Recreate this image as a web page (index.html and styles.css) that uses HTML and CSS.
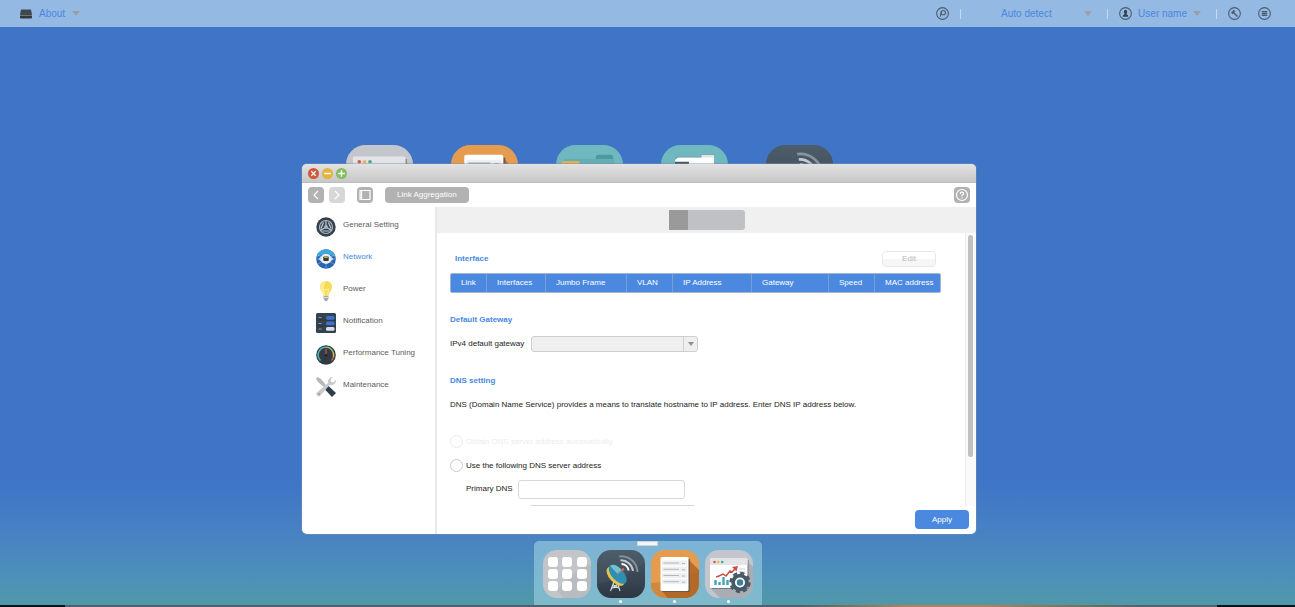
FILE: index.html
```html
<!DOCTYPE html>
<html lang="en">
<head>
<meta charset="utf-8">
<title>Network settings</title>
<link rel="stylesheet" href="styles.css">
</head>
<body>
<svg class="defs" aria-hidden="true">
  <linearGradient id="darkTile" x1="0" y1="0" x2="0" y2="1"><stop offset="0" stop-color="#4a5a68"/><stop offset="1" stop-color="#2c3844"/></linearGradient>
  <clipPath id="tile"><rect width="48" height="48" rx="14"/></clipPath>
  <symbol id="app-grid" viewBox="0 0 48 48">
    <g clip-path="url(#tile)"><rect width="48" height="48" fill="#c3c5c9"/>
    <path d="M14 40 43 12 48 17V48H20Z" fill="#aeb1b6" opacity=".5"/></g>
    <g fill="#fff"><rect x="5" y="7" width="10" height="10" rx="3"/><rect x="19" y="7" width="10" height="10" rx="3"/><rect x="34" y="7" width="10" height="10" rx="3"/><rect x="5" y="19" width="10" height="10" rx="3"/><rect x="19" y="19" width="10" height="10" rx="3"/><rect x="34" y="19" width="10" height="10" rx="3"/><rect x="5" y="31" width="10" height="10" rx="3"/><rect x="19" y="31" width="10" height="10" rx="3"/><rect x="34" y="31" width="10" height="10" rx="3"/></g>
  </symbol>
  <symbol id="app-dish" viewBox="0 0 48 48">
    <g clip-path="url(#tile)"><rect width="48" height="48" fill="url(#darkTile)"/>
    <path d="M0 34Q26 30 48 12V0H0Z" fill="#5b6873" opacity=".22"/></g>
    <g fill="none" stroke-width="1.9"><path d="M22.300 6.500A16 16 0 0 1 40.500 22" stroke="#89929e"/><path d="M23.500 10.300A12 12 0 0 1 36 21" stroke="#c4c9d0"/><path d="M24.500 14A7 7 0 0 1 31.500 20.500" stroke="#fff"/></g>
    <path d="M17.500 30 13.500 41M19.500 30l3.500 11M14.500 38l8-1M15.500 34.500l7 4M21 34l-6.500 4.500" stroke="#d9dde0" stroke-width="1.100" fill="none"/>
    <g transform="rotate(48 20 25)"><ellipse cx="20" cy="27" rx="11.500" ry="6" fill="#e7c34c"/><ellipse cx="20" cy="24" rx="11.500" ry="6" fill="#2f8fb2"/><path d="M8.500 24Q9 18 20 18L20 24Z" fill="#6fc3cf"/></g>
    <path d="m20 24 6-4.500" stroke="#bd7059" stroke-width="1"/><circle cx="26" cy="19.500" r="1.400" fill="#db5a42"/>
  </symbol>
  <symbol id="app-list" viewBox="0 0 48 48">
    <g clip-path="url(#tile)"><rect width="48" height="48" fill="#e59c4f"/>
    <path d="M37 9 48 20V48H17L10 40Z" fill="#b96d2b"/>
    <path d="M0 33Q25 31 48 22V48H0Z" fill="#aa611f" opacity=".35"/></g>
    <rect x="11" y="9" width="28" height="33" rx="1" fill="#6d5a4b"/>
    <rect x="9.500" y="7" width="28" height="34" rx="1.500" fill="#fff"/>
    <g fill="#eeeff1"><rect x="11" y="10.500" width="25" height="5"/><rect x="11" y="16.800" width="25" height="5"/><rect x="11" y="23" width="25" height="5"/><rect x="11" y="29.200" width="25" height="5"/></g>
    <path d="M12.500 13H28M12.500 19.300H28M12.500 25.500H28M12.500 31.700H28" stroke="#a6a8ab" stroke-width=".8"/>
    <path d="M31 13.500h3M31 19.800h3M31 26h3M31 32.200h3" stroke="#74aab2" stroke-width=".7"/>
  </symbol>
  <symbol id="app-monitor" viewBox="0 0 48 48">
    <g clip-path="url(#tile)"><rect width="48" height="48" fill="#c3c6cc"/>
    <path d="M5 38 40 9 48 17V48H15Z" fill="#9a9da1" opacity=".6"/></g>
    <rect x="7" y="10" width="36.500" height="29" fill="#747a80"/>
    <rect x="5" y="8.500" width="37.500" height="29.500" rx="1" fill="#fff"/><path d="M5 10q0-1.500 1.500-1.500h34.500q1.500 0 1.500 1.500v5H5Z" fill="#e3e4e7"/>
    <circle cx="9.500" cy="12" r="1.300" fill="#cf5b4c"/><circle cx="13.300" cy="12" r="1.300" fill="#e5ba56"/><circle cx="17.200" cy="12" r="1.300" fill="#4aa594"/>
    <path d="M11 27l3-1 4-2 3 2 4-5 2 1 4-4" fill="none" stroke="#c94f40" stroke-width="1.500"/><path d="m27 17 6-1-1.500 5.500Z" fill="#c94f40"/>
    <path d="M10.500 35v-5M14.500 35v-3M18.500 35v-8M22.500 35v-5" stroke="#42a3b9" stroke-width="2.400"/>
    <path d="M34 19h6M34 22h6" stroke="#c7cbd0"/>
    <circle cx="35" cy="32.500" r="9.500" fill="none" stroke="#475966" stroke-width="2.400" stroke-dasharray="4.200 3.262"/>
    <circle cx="35" cy="32.500" r="8.800" fill="#475966"/><circle cx="35" cy="32.500" r="5" fill="#fff"/><circle cx="35" cy="32.500" r="3.200" fill="#3b8096"/>
  </symbol>
  <symbol id="app-folder" viewBox="0 0 48 48">
    <rect width="48" height="48" rx="14" fill="#70b8c0"/>
    <path d="M28.500 12V9q0-2 2-2h8.500q2 0 2 2v4Z" fill="#4b9a9f"/><rect x="5" y="10" width="37" height="27" rx="2" fill="#65aeb4"/>
    <rect x="4" y="11.500" width="13" height="6" rx="1.500" fill="#e0b34d"/><rect x="4" y="14" width="34" height="25" rx="2" fill="#e0b34d"/>
  </symbol>
  <symbol id="app-files" viewBox="0 0 48 48">
    <rect width="48" height="48" rx="14" fill="#70b8c0"/>
    <path d="M11 8.500h18V6.500h9V35H11Z" fill="#6d8f96"/><path d="M29 10V7h9v5Z" fill="#dfe4e6"/><path d="M12 9h26v26H10V11Z" fill="#fff"/><path d="M10 12h10v4h16v20H10Z" fill="#485663"/>
  </symbol>
</svg>

<header class="topbar">
  <button class="menu-button menu-about" type="button">
    <svg width="12" height="10" viewBox="0 0 12 10"><path d="M1 .5h10l1 5.500H0Z" fill="#3f474f"/><rect y="6" width="12" height="3.500" rx="1" fill="#35393d"/><path d="M0 6.500h12" stroke="#8a8d90" stroke-width=".7"/></svg>
    <span>About</span><i class="caret"></i>
  </button>
  <div class="topbar-tools">
    <button class="round-icon" type="button" aria-label="Search"><svg viewBox="0 0 12 12"><circle cx="6" cy="6" r="5.400"/><circle cx="6.700" cy="5.200" r="2"/><path d="M5 4.200 3.900 9"/></svg></button>
    <span class="divider"></span>
    <button class="menu-button menu-language" type="button"><span>Auto detect</span><i class="caret"></i></button>
    <span class="divider"></span>
    <button class="menu-button menu-user" type="button">
      <svg class="user-icon" viewBox="0 0 12 12"><circle cx="6" cy="6" r="5.400" fill="none" stroke="#4b5b6d"/><ellipse cx="6" cy="4.500" rx="1.500" ry="2" fill="#344150"/><path d="M3.300 9q0-1.500 2-2.500V5.500h1.400v1q2 1 2 2.500Z" fill="#344150"/></svg>
      <span>User name</span><i class="caret"></i>
    </button>
    <span class="divider"></span>
    <button class="round-icon" type="button" aria-label="Tools"><svg viewBox="0 0 12 12"><circle cx="6" cy="6" r="5.400"/><path d="m5.200 5.200 3.600 3.500" stroke-width="1.300"/><path d="m3.500 6 2.500-2.700" stroke-width="2"/></svg></button>
    <button class="round-icon" type="button" aria-label="Messages"><svg viewBox="0 0 12 12"><circle cx="6" cy="6" r="5.400"/><path d="M3.500 4.200h5M3.500 6h5M3.500 7.800h5" stroke-width="1.200"/></svg></button>
  </div>
</header>

<main class="desktop">
  <div class="apps">
    <svg><use href="#app-monitor"/></svg>
    <svg><use href="#app-list"/></svg>
    <svg><use href="#app-folder"/></svg>
    <svg><use href="#app-files"/></svg>
    <svg><use href="#app-dish"/></svg>
  </div>

  <section class="window">
    <div class="titlebar">
      <button class="light light-close" type="button" aria-label="Close"><svg viewBox="0 0 10 10"><path d="m3 3 4 4M7 3 3 7"/></svg></button>
      <button class="light light-min" type="button" aria-label="Minimize"><svg viewBox="0 0 10 10"><path d="M2 5h6"/></svg></button>
      <button class="light light-max" type="button" aria-label="Maximize"><svg viewBox="0 0 10 10"><path d="M2 5h6M5 2v6"/></svg></button>
    </div>
    <div class="toolbar">
      <button class="tool" type="button" aria-label="Back"><svg viewBox="0 0 16 16"><path d="m10 4-4 4 4 4"/></svg></button>
      <button class="tool tool-off" type="button" aria-label="Forward"><svg viewBox="0 0 16 16"><path d="m6 4 4 4-4 4"/></svg></button>
      <button class="tool tool-panel" type="button" aria-label="Toggle sidebar"><svg viewBox="0 0 16 16"><path d="M3 3.500h10v9H3ZM4.500 3.500v9"/></svg></button>
      <button class="crumb" type="button">Link Aggregation</button>
      <button class="tool tool-help" type="button" aria-label="Help"><svg viewBox="0 0 16 16"><circle cx="8" cy="8" r="5.500"/><path d="M6.300 6.900q0-1.800 1.700-1.800t1.700 1.500Q9.700 7.500 8 8.300v1M8 10.200v1.200"/></svg></button>
    </div>
    <div class="window-body">
      <nav class="sidebar">
        <a href="#"><svg viewBox="0 0 20 20"><circle cx="10" cy="10" r="9.700" fill="#34404c"/><circle cx="10" cy="10" r="6.500" fill="none" stroke="#aab8c4" stroke-width="1.200"/><path d="M7.500 5.500 5 11.500M12.500 5.500 15 11.500M6.500 14h7M10 10V4M10 10l-5.500 3.500M10 10l5.500 3.500" fill="none" stroke="#c1cbd3" stroke-width="1.200"/><circle cx="10" cy="10" r="2" fill="#a6b2bd"/></svg><span>General Setting</span></a>
        <a href="#" class="active"><svg viewBox="0 0 20 20"><circle cx="10" cy="10" r="9.800" fill="#2864b4"/><path d="M.5 8a9.700 9.700 0 0 1 19 0Q10 3 .5 8Z" fill="#43a6d9"/><path d="m2 6 16 9M18 6 2 15M10 13v6M1 10h18" stroke="#7fbde6" stroke-width=".6"/><path d="M2.500 10 7 5.500h6l4.500 4.500-4.500 4H7Z" fill="#cfd8df"/><circle cx="10" cy="10" r="5" fill="#e9edf0"/><rect x="7.300" y="7.500" width="5.400" height="4.500" rx=".8" fill="#3c3a2e"/><path d="M8.300 8.500h3.400" stroke="#d3b644"/></svg><span>Network</span></a>
        <a href="#"><svg viewBox="0 0 20 20"><path d="M10 0C6 0 4 3 4 6c0 3.500 3 5 3.500 9h5C13 11 16 9.500 16 6c0-3-2-6-6-6Z" fill="#f8db55"/><path d="M10 0C6 0 4 3 4 6c0 3.500 3 5 3.500 9H9Q6 7 10 0Z" fill="#fbea91"/><path d="m8.500 14-1-6 2.500 1 2.500-1-1 6" fill="none" stroke="#fff5b8" stroke-width=".8"/><path d="M7.500 15h5v2.500L11 20H9l-1.500-2.500Z" fill="#a5a7aa"/><path d="M7.500 16.500h5" stroke="#ddd"/></svg><span>Power</span></a>
        <a href="#"><svg viewBox="0 0 20 20"><rect width="20" height="20" rx="1.500" fill="#34424f"/><path d="M0 7h20M0 13h20" stroke="#26313b" stroke-width=".7"/><path d="M2.500 4.500h3M2.500 10.500h3M2.500 16h3" stroke="#8d9aa5"/><g fill="#3c72cc"><rect x="10" y="3" width="8.500" height="3.800" rx="1.500"/><rect x="10" y="8.500" width="8.500" height="3.800" rx="1.500"/></g><rect x="10" y="14" width="8.500" height="3.800" rx="1.500" fill="#dadfe3"/></svg><span>Notification</span></a>
        <a href="#"><svg viewBox="0 0 20 20"><circle cx="10" cy="10" r="9.800" fill="#303b46"/><g fill="none" stroke-width="1.500"><path d="M4.500 15.500A7.700 7.700 0 0 1 10 2.300" stroke="#4fb5b6"/><path d="M10 2.300A7.700 7.700 0 0 1 17 7" stroke="#90ba75"/><path d="M17 7a7.700 7.700 0 0 1 .5 5" stroke="#dfba48"/><path d="M17.500 12a7.700 7.700 0 0 1-2 3.500" stroke="#d75a43"/></g><path d="M10 4v6.500" stroke="#cf5544" stroke-width="1.200"/><circle cx="10" cy="10.500" r="1.400" fill="#1d252c"/></svg><span>Performance Tuning</span></a>
        <a href="#"><svg viewBox="0 0 20 20"><path d="M0 1.500 1.500 0 5 2l7 8.500-1.500 1.500L2 5Z" fill="#b5b8ba"/><path d="m9 12.500 3.500-3.500 7.500 7-4 4Z" fill="#2e3b49"/><path d="M20 4a4.800 4.800 0 0 1-6.500 4L4.500 18.500a2.300 2.300 0 0 1-3.500-3L12 6A4.800 4.800 0 0 1 17 0L14.800 2.500l.5 2.500 2.200.3L19.500 3Z" fill="#c8cbcd"/><circle cx="3" cy="16.900" r=".8" fill="#85898c"/></svg><span>Maintenance</span></a>
      </nav>
      <div class="content">
        <div class="tabs"><button class="tab tab-on" type="button" aria-label="First tab"></button><button class="tab" type="button" aria-label="Second tab"></button></div>
        <div class="scroller">
          <form class="page">
            <div class="section-head"><h2>Interface</h2><button class="edit" type="button" disabled>Edit</button></div>
            <table class="interfaces">
              <colgroup><col class="c-link"><col class="c-interfaces"><col class="c-jumbo"><col class="c-vlan"><col class="c-ip"><col class="c-gateway"><col class="c-speed"><col class="c-mac"></colgroup>
              <thead><tr><th>Link</th><th>Interfaces</th><th>Jumbo Frame</th><th>VLAN</th><th>IP Address</th><th>Gateway</th><th>Speed</th><th>MAC address</th></tr></thead>
            </table>
            <h2 class="gateway-title">Default Gateway</h2>
            <div class="field gateway-field"><label for="gateway">IPv4 default gateway</label><span class="select-box"><select id="gateway" disabled></select><span class="select-arrow"><i class="caret"></i></span></span></div>
            <h2 class="dns-title">DNS setting</h2>
            <p>DNS (Domain Name Service) provides a means to translate hostname to IP address. Enter DNS IP address below.</p>
            <div class="choice choice-off"><input type="radio" id="auto" name="dns" disabled><label for="auto">Obtain DNS server address automatically</label></div>
            <div class="choice"><input type="radio" id="manual" name="dns"><label for="manual">Use the following DNS server address</label></div>
            <div class="field dns-field"><label for="primary">Primary DNS</label><input type="text" id="primary"></div>
            <div class="field second-field"><input type="text" aria-label="Alternate server"></div>
          </form>
          <div class="track"><div class="thumb"></div></div>
        </div>
        <div class="actions"><button class="apply" type="button">Apply</button></div>
      </div>
    </div>
  </section>

  <nav class="dock">
    <span class="handle"></span>
    <button type="button" aria-label="Apps"><svg><use href="#app-grid"/></svg></button>
    <button type="button" class="running" aria-label="Discovery"><svg><use href="#app-dish"/></svg></button>
    <button type="button" class="running" aria-label="List"><svg><use href="#app-list"/></svg></button>
    <button type="button" class="running" aria-label="Monitor"><svg><use href="#app-monitor"/></svg></button>
  </nav>
</main>
<div class="edge"></div>
</body>
</html>
```

FILE: styles.css
```css
* { box-sizing: border-box; }
body {
  margin: 0;
  height: 100vh;
  display: flex;
  flex-direction: column;
  overflow: hidden;
  font: 8px/12px "Liberation Sans", Arial, sans-serif;
  color: #222;
  background: linear-gradient(#3f74c7 0, #3f74c7 79%, #4882c3 88%, #4d90b9 95%, #5098a6 100%);
}
button, input, select { font: inherit; color: inherit; padding: 0; margin: 0; border: 0; background: none; }
svg { display: block; }
h2, p { margin: 0; }
h2 { font-size: 8px; line-height: 12px; color: #4788df; }
.defs { position: absolute; width: 0; height: 0; }
.caret { border: 4px solid transparent; border-top: 5px solid #9a9fa2; border-bottom: 0; }

.topbar { display: flex; justify-content: space-between; align-items: center; height: 27px; flex: none; padding: 0 24px 0 20px; background: #94b9e2; font-size: 10px; color: #4b87e3; }
.menu-button { display: flex; align-items: center; }
.menu-about { gap: 7px; }
.topbar-tools { display: flex; align-items: center; }
.round-icon, .user-icon { width: 13px; height: 13px; }
.round-icon svg { fill: none; stroke: #4b5b6d; stroke-width: 1; }
.round-icon + .round-icon { margin-left: 17px; }
.divider { width: 1px; height: 10px; margin: 0 11px; background: #c4daf2; }
.menu-language { width: 124px; padding: 0 4px 0 29px; justify-content: space-between; }
.menu-user { gap: 6px; padding-right: 4px; }

.desktop { position: relative; flex: 1; }
.apps { display: flex; gap: 38px; padding: 118px 0 0 346px; }
.apps svg { width: 67px; height: 67px; flex: none; }

.window { position: absolute; top: 137px; right: 319px; bottom: 71px; left: 302px; display: flex; flex-direction: column; overflow: hidden; border-radius: 5px; background: #fff; box-shadow: 0 0 1px 1px rgba(120, 145, 175, .5); }
.titlebar { display: flex; gap: 3px; align-items: center; flex: none; height: 19px; padding: 0 6px; background: linear-gradient(#e2e2e2, #c7c7c7); border-bottom: 1px solid #bdbdbd; }
.light { width: 11px; height: 11px; border-radius: 50%; }
.light svg { fill: none; stroke: #fff; stroke-width: 1.2; }
.light-close { background: #d2583b; }
.light-min { background: #e4b33d; }
.light-max { background: #83bd5d; }
.toolbar { display: flex; align-items: center; flex: none; height: 24px; padding: 0 6px; }
.tool { width: 16px; height: 16px; border-radius: 4px; background: #b2b2b2; }
.tool svg { fill: none; stroke: #fff; stroke-width: 1.2; }
.tool-off { margin-left: 5px; background: #d7d7d7; }
.tool-panel { margin: 0 12px; }
.tool-help { margin-left: auto; }
.crumb { height: 16px; padding: 0 12px; border-radius: 4px; background: #b2b2b2; color: #fff; }

.window-body { display: flex; flex: 1; min-height: 0; }
.sidebar { width: 135px; flex: none; padding-top: 4px; border-right: 2px solid #e8e8e8; }
.sidebar a { display: flex; align-items: center; gap: 7px; height: 32px; padding-left: 14px; color: #5c5c5c; text-decoration: none; }
.sidebar svg { width: 20px; height: 20px; }
.sidebar span { padding-bottom: 4px; }
.sidebar .active { color: #4788df; }

.content { display: flex; flex-direction: column; flex: 1; min-width: 0; }
.tabs { display: flex; justify-content: center; align-items: center; flex: none; height: 26px; background: #f0f0f0; }
.tab { width: 57px; height: 20px; border-radius: 0 3px 3px 0; background: #c0c1c4; }
.tab-on { width: 19px; border-radius: 0; background: #9a9a9a; }
.scroller { display: flex; flex: 1; min-height: 0; overflow: hidden; }
.page { flex: 1; min-width: 0; padding: 18px 24px 0 13px; }
.section-head { display: flex; justify-content: space-between; align-items: center; padding: 0 5px; }
.edit { width: 54px; height: 16px; border: 1px solid #e8e8e8; border-radius: 4px; background: linear-gradient(#fff 50%, #f6f6f6 50%); color: #b9b9b9; }
.interfaces { width: 100%; height: 20px; margin-top: 6px; table-layout: fixed; border-collapse: separate; border-spacing: 0; border: 1px solid #a3b4cf; border-radius: 2px; background: #4b89e1; color: #fff; }
.interfaces th { padding: 0 0 0 10px; border-left: 1px solid #7d9cd0; font-weight: 400; text-align: left; white-space: nowrap; }
.interfaces th:first-child { border-left: 0; }
.c-link { width: 35px; }
.c-interfaces { width: 59px; }
.c-jumbo { width: 81px; }
.c-vlan { width: 46px; }
.c-ip { width: 79px; }
.c-gateway { width: 77px; }
.c-speed { width: 46px; }
.c-mac { width: 66px; }
.gateway-title { margin-top: 21px; }
.field { display: flex; align-items: center; }
.gateway-field { gap: 7px; margin-top: 10px; }
.select-box { display: grid; width: 167px; height: 16px; }
.select-box > * { grid-area: 1 / 1; }
.select-box select { appearance: none; border: 1px solid #cfcfcf; border-radius: 3px; background: #efefef; opacity: 1; }
.select-arrow { display: flex; align-items: center; justify-content: center; justify-self: end; width: 15px; border-left: 1px solid #cfcfcf; pointer-events: none; }
.select-arrow .caret { border-width: 4px 3px 0; border-top-color: #8f8f8f; }
.dns-title { margin-top: 23px; }
.page p { margin-top: 12px; }
.choice { display: flex; align-items: center; gap: 3px; margin-top: 11px; }
.choice input { appearance: none; width: 13px; height: 13px; border: 1px solid #c9c9c9; border-radius: 50%; }
.choice-off { margin-top: 24px; color: #ededed; }
.choice-off input { border-color: #e8e8e8; }
.dns-field { gap: 5px; margin-top: 8px; padding-left: 16px; }
.dns-field label { padding-bottom: 2px; }
.field input { width: 167px; height: 19px; border: 1px solid #d8d8d8; border-radius: 3px; background: #fff; }
.second-field { margin-top: 6px; padding-left: 79px; }
.track { width: 11px; flex: none; padding: 2px 3px 0 2px; border-left: 1px solid #ececec; background: #fafafa; }
.thumb { height: 82%; border-radius: 3px; background: #c1c1c1; }
.actions { display: flex; justify-content: flex-end; flex: none; height: 28px; padding: 4px 7px 5px; }
.apply { width: 54px; border-radius: 4px; background: #4b89e1; color: #fff; }

.dock { position: absolute; bottom: 0; left: 50%; transform: translateX(-50%); display: flex; gap: 6px; height: 64px; padding: 9px 9px 0; border-radius: 5px 5px 0 0; background: rgba(160, 210, 225, .6); }
.dock button { position: relative; width: 48px; height: 48px; }
.dock svg { width: 48px; height: 48px; }
.running::after { content: ""; position: absolute; bottom: -5px; left: 22px; width: 3px; height: 3px; border-radius: 50%; background: #fff; }
.handle { position: absolute; top: 0; left: 103px; width: 21px; height: 5px; border: 1px solid #ccd5da; background: #f4f4f4; }
.edge { flex: none; height: 2px; background: linear-gradient(90deg, #08131c 5%, #4d6470 5%, #4d6470 62%, #b08259 70%, #b08259 76%, #50646e 88%, #50646e 94%, #08131c 94%); }
```
